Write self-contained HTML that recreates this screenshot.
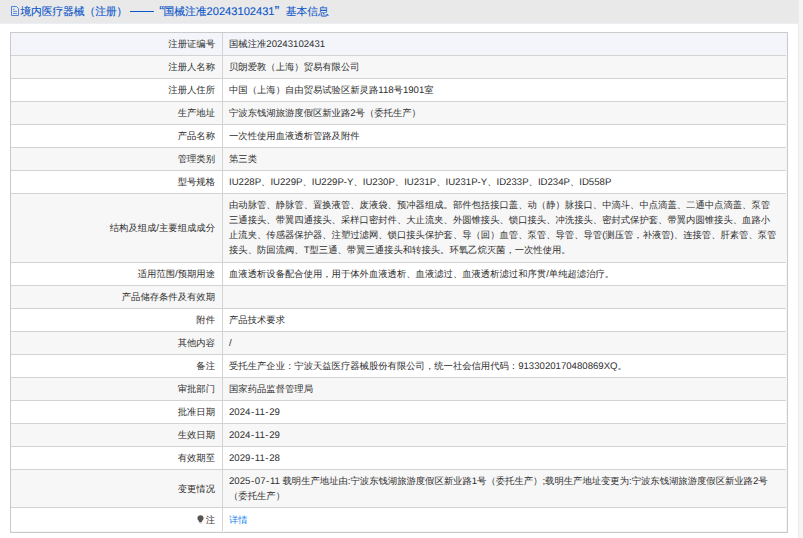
<!DOCTYPE html>
<html><head><meta charset="utf-8">
<style>
@font-face{font-family:"Liberation Sans";src:local("Liberation Sans");size-adjust:103%;}
html,body{margin:0;padding:0;width:803px;height:538px;overflow:hidden;background:#fff;}
body{font-family:"Liberation Sans",sans-serif;position:relative;text-rendering:geometricPrecision;}
#hdr{position:absolute;left:0;top:0;width:798px;height:23px;background:#e9e9e9;border-bottom:1px solid #eceef3;}
#hdr .t{position:absolute;top:6px;font-size:10.8px;line-height:13px;color:#0d57c9;white-space:nowrap;-webkit-text-stroke:0.12px #0d57c9;}
#dash{position:absolute;left:130px;top:11px;width:24px;height:1px;background:#0d57c9;}
#hdr svg{position:absolute;left:10px;top:5px;}
#strip{position:absolute;left:798px;top:0;width:5px;height:538px;background:#f5f5f5;border-left:1px solid #ebebeb;box-sizing:border-box;}
#box{position:absolute;left:10px;top:32px;width:776px;height:499px;border:1px solid #cacaca;background:#f3f5fa;}
#tbl{position:absolute;left:0;top:0;width:775px;border-collapse:collapse;border-spacing:0;font-size:9.34px;color:#2e2e2e;}
#tbl td{padding:0;line-height:15px;vertical-align:middle;border-bottom:1px solid #d3d3d3;}
#tbl tr.last td{border-bottom:0;}
#tbl td.l{width:204px;text-align:right;padding-right:7px;border-right:1px solid #d3d3d3;}
#tbl td.v{padding-left:6px;padding-right:0;white-space:nowrap;}
#tbl tr.b td{background:#f3f5fa;}
#tbl tr.g td{background:#f7f7f7;}
#tbl tr.w td{background:#fff;}
.bulb{vertical-align:-1px;margin-right:2px;}
.h{padding:0 0.6px;}
#tbl tr.last td{padding-top:2px;}
a{color:#1583f0;text-decoration:none;}
</style></head><body>
<div id="hdr"><svg width="10" height="12" viewBox="0 0 10 12"><path d="M1.5 1.5H6.5L8.5 3.5V10.5H1.5Z" fill="none" stroke="#3f78d8" stroke-width="0.9"/><path d="M3 4.3H4.6M3 6.4H7M3 8.5H7" stroke="#3f78d8" stroke-width="0.8"/></svg><span class="t" style="left:20.4px;letter-spacing:-0.12px">境内医疗器械（注册）</span><div id="dash"></div><span class="t" id="q1" style="left:159.2px;font-size:14px;top:6px">“</span><span class="t" id="q" style="left:163.4px">国械注准20243102431</span><span class="t" id="q2" style="left:274.6px;font-size:14px;top:6px">”</span><span class="t" id="jb" style="left:285.7px">基本信息</span></div>
<div id="strip"></div>
<div id="box"><table id="tbl">
<tr class="b"><td class="l" style="height:22px">注册证编号</td><td class="v">国械注准20243102431</td></tr>
<tr class="g"><td class="l" style="height:22px">注册人名称</td><td class="v">贝朗爱敦（上海）贸易有限公司</td></tr>
<tr class="w"><td class="l" style="height:22px">注册人住所</td><td class="v">中国（上海）自由贸易试验区新灵路118号1901室</td></tr>
<tr class="g"><td class="l" style="height:22px">生产地址</td><td class="v">宁波东钱湖旅游度假区新业路2号（委托生产）</td></tr>
<tr class="w"><td class="l" style="height:22px">产品名称</td><td class="v">一次性使用血液透析管路及附件</td></tr>
<tr class="g"><td class="l" style="height:22px">管理类别</td><td class="v">第三类</td></tr>
<tr class="w"><td class="l" style="height:22px">型号规格</td><td class="v">IU228P、IU229P、IU229P-Y、IU230P、IU231P、IU231P-Y、ID233P、ID234P、ID558P</td></tr>
<tr class="g"><td class="l" style="height:68px">结构及组成/主要组成成分</td><td class="v">由动脉管、静脉管、置换液管、废液袋、预冲器组成。部件包括接口盖、动（静）脉接口、中滴斗、中点滴盖、二通中点滴盖、泵管<br>三通接头、带翼四通接头、采样口密封件、大止流夹、外圆锥接头、锁口接头、冲洗接头、密封式保护套、带翼内圆锥接头、血路小<br>止流夹、传感器保护器、注塑过滤网、锁口接头保护套、导（回）血管、泵管、导管、导管(测压管，补液管)、连接管、肝素管、泵管<br>接头、防回流阀、T型三通、带翼三通接头和转接头。环氧乙烷灭菌，一次性使用。</td></tr>
<tr class="w"><td class="l" style="height:22px">适用范围/预期用途</td><td class="v">血液透析设备配合使用，用于体外血液透析、血液滤过、血液透析滤过和序贯/单纯超滤治疗。</td></tr>
<tr class="g"><td class="l" style="height:22px">产品储存条件及有效期</td><td class="v"></td></tr>
<tr class="w"><td class="l" style="height:22px">附件</td><td class="v">产品技术要求</td></tr>
<tr class="g"><td class="l" style="height:22px">其他内容</td><td class="v">/</td></tr>
<tr class="w"><td class="l" style="height:22px">备注</td><td class="v">受托生产企业：宁波天益医疗器械股份有限公司，统一社会信用代码：9133020170480869XQ。</td></tr>
<tr class="g"><td class="l" style="height:22px">审批部门</td><td class="v">国家药品监督管理局</td></tr>
<tr class="w"><td class="l" style="height:22px">批准日期</td><td class="v">2024<span class='h'>-</span>11<span class='h'>-</span>29</td></tr>
<tr class="g"><td class="l" style="height:22px">生效日期</td><td class="v">2024<span class='h'>-</span>11<span class='h'>-</span>29</td></tr>
<tr class="w"><td class="l" style="height:22px">有效期至</td><td class="v">2029<span class='h'>-</span>11<span class='h'>-</span>28</td></tr>
<tr class="g"><td class="l" style="height:37px;padding-top:2px;height:35px">变更情况</td><td class="v">2025<span class='h'>-</span>07<span class='h'>-</span>11 载明生产地址由:宁波东钱湖旅游度假区新业路1号（委托生产）;载明生产地址变更为:宁波东钱湖旅游度假区新业路2号<br>（委托生产）</td></tr>
<tr class="w last"><td class="l" style="height:21px"><svg class="bulb" width="7" height="9" viewBox="0 0 7 9"><path d="M3.5 0.3C1.7 0.3 0.4 1.6 0.4 3.3C0.4 4.6 1.2 5.3 1.9 6.1L2.1 7H4.9L5.1 6.1C5.8 5.3 6.6 4.6 6.6 3.3C6.6 1.6 5.3 0.3 3.5 0.3Z" fill="#555"/><path d="M2.3 7.8H4.7" stroke="#888" stroke-width="0.8"/></svg>注</td><td class="v"><a>详情</a></td></tr>
</table></div>
</body></html>
